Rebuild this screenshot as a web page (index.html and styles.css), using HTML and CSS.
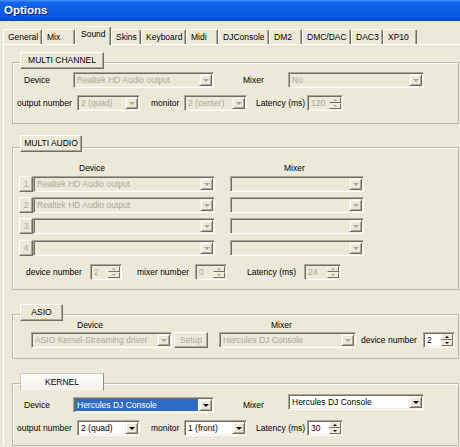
FILE: index.html
```html
<!DOCTYPE html>
<html lang="en">
<head>
  <meta charset="UTF-8" />
  <title>Options</title>
  <link rel="stylesheet" href="styles.css">
</head>
<body>
  <div class="titlebar">Options</div>

  <div class="tabs">
    <div class="tab tab-general">General</div>
    <div class="tab tab-mix">Mix</div>
    <div class="tab tab-sound active">Sound</div>
    <div class="tab tab-skins">Skins</div>
    <div class="tab tab-keyboard">Keyboard</div>
    <div class="tab tab-midi">Midi</div>
    <div class="tab tab-djconsole">DJConsole</div>
    <div class="tab tab-dm2">DM2</div>
    <div class="tab tab-dmc">DMC/DAC</div>
    <div class="tab tab-dac3">DAC3</div>
    <div class="tab tab-xp10">XP10</div>
  </div>

  <div class="page">

    <!-- multi channel -->
    <div class="group g-channel">
      <div class="group-label label-channel">MULTI CHANNEL</div>
      <div class="frame">
        <div class="row">
          <span class="lbl device-lbl">Device</span>
          <div class="combo off device-box"><span class="val">Realtek HD Audio output</span><span class="drop"></span></div>
          <span class="lbl mixer-lbl">Mixer</span>
          <div class="combo off mixer-box"><span class="val">No</span><span class="drop"></span></div>
        </div>
        <div class="row out-row">
          <span class="lbl out-lbl">output number</span>
          <div class="combo off out-box"><span class="val">2 (quad)</span><span class="drop"></span></div>
          <span class="lbl mon-lbl">monitor</span>
          <div class="combo off mon-box"><span class="val">2 (center)</span><span class="drop"></span></div>
          <span class="lbl lat-lbl">Latency (ms)</span>
          <div class="spin off lat-box"><span class="val">120</span><span class="arrows"><i class="up"></i><i class="dn"></i></span></div>
        </div>
      </div>
    </div>

    <!-- multi audio -->
    <div class="group g-audio">
      <div class="group-label label-audio">MULTI AUDIO</div>
      <div class="frame">
        <div class="head">
          <span class="ma-head-dev">Device</span>
          <span>Mixer</span>
        </div>
        <div class="row ma-row">
          <span class="num">1</span>
          <div class="combo off ma-dev"><span class="val">Realtek HD Audio output</span><span class="drop"></span></div>
          <div class="combo off ma-mix"><span class="val"></span><span class="drop"></span></div>
        </div>
        <div class="row ma-row">
          <span class="num">2</span>
          <div class="combo off ma-dev"><span class="val">Realtek HD Audio output</span><span class="drop"></span></div>
          <div class="combo off ma-mix"><span class="val"></span><span class="drop"></span></div>
        </div>
        <div class="row ma-row">
          <span class="num">3</span>
          <div class="combo off ma-dev"><span class="val"></span><span class="drop"></span></div>
          <div class="combo off ma-mix"><span class="val"></span><span class="drop"></span></div>
        </div>
        <div class="row ma-row ma-last">
          <span class="num">4</span>
          <div class="combo off ma-dev"><span class="val"></span><span class="drop"></span></div>
          <div class="combo off ma-mix"><span class="val"></span><span class="drop"></span></div>
        </div>
        <div class="row ma-bottom">
          <span class="lbl dn-lbl">device number</span>
          <div class="spin off small-spin"><span class="val">2</span><span class="arrows"><i class="up"></i><i class="dn"></i></span></div>
          <span class="lbl mn-lbl">mixer number</span>
          <div class="spin off small-spin"><span class="val">0</span><span class="arrows"><i class="up"></i><i class="dn"></i></span></div>
          <span class="lbl lat2-lbl">Latency (ms)</span>
          <div class="spin off lat2-box"><span class="val">24</span><span class="arrows"><i class="up"></i><i class="dn"></i></span></div>
        </div>
      </div>
    </div>

    <!-- asio -->
    <div class="group g-asio">
      <div class="group-label label-asio">ASIO</div>
      <div class="frame">
        <div class="head">
          <span class="asio-head-dev">Device</span>
          <span>Mixer</span>
        </div>
        <div class="row asio-row">
          <div class="combo off asio-dev"><span class="val">ASIO Kernel-Streaming driver</span><span class="drop"></span></div>
          <span class="btn off setup">Setup</span>
          <div class="combo off asio-mix"><span class="val">Hercules DJ Console</span><span class="drop"></span></div>
          <span class="lbl asio-dn-lbl">device number</span>
          <div class="spin small-spin"><span class="val">2</span><span class="arrows"><i class="up"></i><i class="dn"></i></span></div>
        </div>
      </div>
    </div>

    <!-- kernel -->
    <div class="group g-kernel">
      <div class="group-label label-kernel current">KERNEL</div>
      <div class="frame">
        <div class="row kernel-top">
          <span class="lbl device-lbl low">Device</span>
          <div class="combo device-box low"><span class="val sel">Hercules DJ Console</span><span class="drop"></span></div>
          <span class="lbl mixer-lbl low">Mixer</span>
          <div class="combo mixer-box high"><span class="val">Hercules DJ Console</span><span class="drop"></span></div>
        </div>
        <div class="row out-row">
          <span class="lbl out-lbl">output number</span>
          <div class="combo out-box"><span class="val">2 (quad)</span><span class="drop"></span></div>
          <span class="lbl mon-lbl">monitor</span>
          <div class="combo mon-box"><span class="val">1 (front)</span><span class="drop"></span></div>
          <span class="lbl lat-lbl">Latency (ms)</span>
          <div class="spin lat-box"><span class="val">30</span><span class="arrows"><i class="up"></i><i class="dn"></i></span></div>
        </div>
      </div>
    </div>

  </div>
</body>
</html>
```

FILE: styles.css
```css
body {
  margin: 0;
  width: 460px;
  height: 447px;
  overflow: hidden;
  background: #ece9d8;
  font-family: "Liberation Sans", Arial, sans-serif;
  font-size: 8.5px;
  color: #000;
}

/* title bar */
.titlebar {
  height: 21px;
  box-sizing: border-box;
  padding: 3px 0 0 4px;
  line-height: 15px;
  font-size: 11.5px;
  font-weight: bold;
  color: #fff;
  text-shadow: 1px 1px #0a1e80;
  background: linear-gradient(#4a93f7 0%, #1266ea 12%, #0a5ce4 45%, #0858e2 80%, #0446cc 100%);
}

/* tabs */
.tabs {
  display: flex;
  align-items: flex-end;
  height: 23px;
  padding-left: 3px;
}
.tab {
  box-sizing: border-box;
  height: 15px;
  padding-left: 4px;
  line-height: 14px;
  white-space: nowrap;
  border-top: 1px solid #fff;
  border-left: 1px solid #fff;
  border-right: 1px solid #716f64;
  box-shadow: inset -1px 0 #aca899;
  border-radius: 2px 2px 0 0;
}
.tab.active {
  height: 19px;
  margin-bottom: -1px;
  padding-left: 5px;
  padding-bottom: 4px;
  position: relative;
  z-index: 1;
  background: #ece9d8;
}
.tab-general { width: 39px; }
.tab-mix { width: 33px; }
.tab-sound { width: 36px; }
.tab-skins { width: 30px; }
.tab-keyboard { width: 45px; }
.tab-midi { width: 32px; }
.tab-djconsole { width: 51px; }
.tab-dm2 { width: 33px; }
.tab-dmc { width: 49px; }
.tab-dac3 { width: 32px; }
.tab-xp10 { width: 34px; }

/* tab page */
.page {
  margin-left: 3px;
  border-top: 1px solid #fff;
  border-left: 1px solid #fff;
  padding-left: 8px;
}

/* group boxes */
.group-label {
  position: relative;
  z-index: 1;
  box-sizing: border-box;
  height: 17px;
  margin-left: 8px;
  line-height: 15px;
  text-align: center;
  white-space: nowrap;
  background: #ece9d8;
  border: 1px solid;
  border-color: #fff #716f64 #716f64 #fff;
  box-shadow: inset -1px -1px #aca899;
}
.group-label.current {
  height: 18px;
  line-height: 16px;
  background: linear-gradient(#fdfdfb, #f3f2ec);
  border-color: #cdcac3 #918f86 #ece9d8 #cdcac3;
  box-shadow: none;
}
.label-channel { width: 84px; }
.label-audio { width: 62px; }
.label-asio { width: 43px; }
.label-kernel { width: 84px; }

.frame {
  margin-right: 1px;
  border: 1px solid #bcb9a9;
  box-shadow: inset 1px 1px #fff;
}

.g-channel { margin-top: 7px; }
.g-channel .frame { margin-top: -7px; padding: 9px 0 12px; }
.g-audio { margin-top: 11px; }
.g-audio .frame { margin-top: -5px; padding: 15px 0 9px; }
.g-asio { margin-top: 14px; }
.g-asio .frame { margin-top: -7px; padding: 5px 0 10px; }
.g-kernel { margin-top: 14px; }
.g-kernel .frame { margin-top: -8px; padding: 10px 0 9px; }

.row {
  display: flex;
  align-items: center;
  height: 16px;
}
.out-row { margin-top: 7px; }
.lbl {
  flex: none;
  white-space: nowrap;
  line-height: 16px;
}
.head {
  display: flex;
  height: 10px;
  line-height: 10px;
}

/* combo boxes */
.combo, .spin {
  flex: none;
  display: flex;
  box-sizing: border-box;
  height: 16px;
  padding: 1px;
  border: 1px solid;
  border-color: #aca899 #fff #fff #aca899;
  box-shadow: inset 1px 1px #716f64, inset -1px -1px #f1efe2;
  background: #fff;
}
.combo.off, .spin.off {
  background: #ece9d8;
  color: #aca899;
}
.val {
  flex: 1;
  min-width: 0;
  padding-left: 2px;
  line-height: 12px;
  white-space: nowrap;
  overflow: hidden;
}
.val.sel {
  margin-right: 1px;
  background: #316ac5;
  color: #fff;
}
.drop {
  flex: none;
  width: 13px;
  box-sizing: border-box;
  display: flex;
  align-items: center;
  justify-content: center;
  background: #ece9d8;
  border: 1px solid;
  border-color: #f1efe2 #716f64 #716f64 #f1efe2;
  box-shadow: inset 1px 1px #fff, inset -1px -1px #aca899;
}
.drop::after {
  content: "";
  border-left: 3px solid transparent;
  border-right: 3px solid transparent;
  border-top: 3px solid #000;
}
.off .drop::after { border-top-color: #aca899; }

/* spin buttons */
.arrows {
  flex: none;
  width: 12px;
  display: flex;
  flex-direction: column;
}
.arrows i {
  flex: 1;
  box-sizing: border-box;
  display: flex;
  align-items: center;
  justify-content: center;
  background: #ece9d8;
  border: 1px solid;
  border-color: #f1efe2 #716f64 #716f64 #f1efe2;
}
.arrows i::after {
  content: "";
  border-left: 2px solid transparent;
  border-right: 2px solid transparent;
}
.arrows .up::after { border-bottom: 2px solid #000; }
.arrows .dn::after { border-top: 2px solid #000; }
.off .arrows .up::after { border-bottom-color: #aca899; }
.off .arrows .dn::after { border-top-color: #aca899; }

/* buttons */
.num, .btn {
  flex: none;
  box-sizing: border-box;
  height: 16px;
  line-height: 14px;
  text-align: center;
  color: #aca899;
  background: #ece9d8;
  border: 1px solid;
  border-color: #fff #716f64 #716f64 #fff;
  box-shadow: inset -1px -1px #aca899;
}

/* multi channel / kernel columns */
.device-lbl { margin-left: 11px; width: 49px; }
.device-box { width: 141px; }
.mixer-lbl { margin-left: 29px; width: 45px; }
.mixer-box { width: 136px; }
.out-lbl { margin-left: 4px; width: 60px; }
.out-box { width: 63px; }
.mon-lbl { margin-left: 11px; width: 33px; }
.mon-box { width: 63px; }
.lat-lbl { margin-left: 9px; width: 51px; }
.lat-box { width: 36px; }

.kernel-top {
  height: 19px;
  align-items: flex-start;
}
.kernel-top .low { align-self: flex-end; }

/* multi audio */
.ma-head-dev { margin-left: 66px; width: 205px; }
.ma-row { margin-top: 5px; }
.head + .ma-row { margin-top: 3px; }
.ma-last { margin-top: 6px; }
.num { margin-left: 6px; width: 14px; }
.ma-dev { width: 182px; }
.ma-mix { margin-left: 15px; width: 134px; }
.ma-bottom { margin-top: 8px; }
.dn-lbl { margin-left: 13px; width: 64px; }
.small-spin { width: 32px; }
.mn-lbl { margin-left: 15px; width: 58px; }
.lat2-lbl { margin-left: 20px; width: 57px; }
.lat2-box { width: 37px; }

/* asio */
.asio-head-dev { margin-left: 64px; width: 194px; }
.asio-row { margin-top: 2px; }
.asio-dev { margin-left: 18px; width: 141px; }
.setup { margin-left: 2px; width: 34px; }
.asio-mix { margin-left: 11px; width: 137px; }
.asio-dn-lbl { margin-left: 5px; width: 62px; }
```
